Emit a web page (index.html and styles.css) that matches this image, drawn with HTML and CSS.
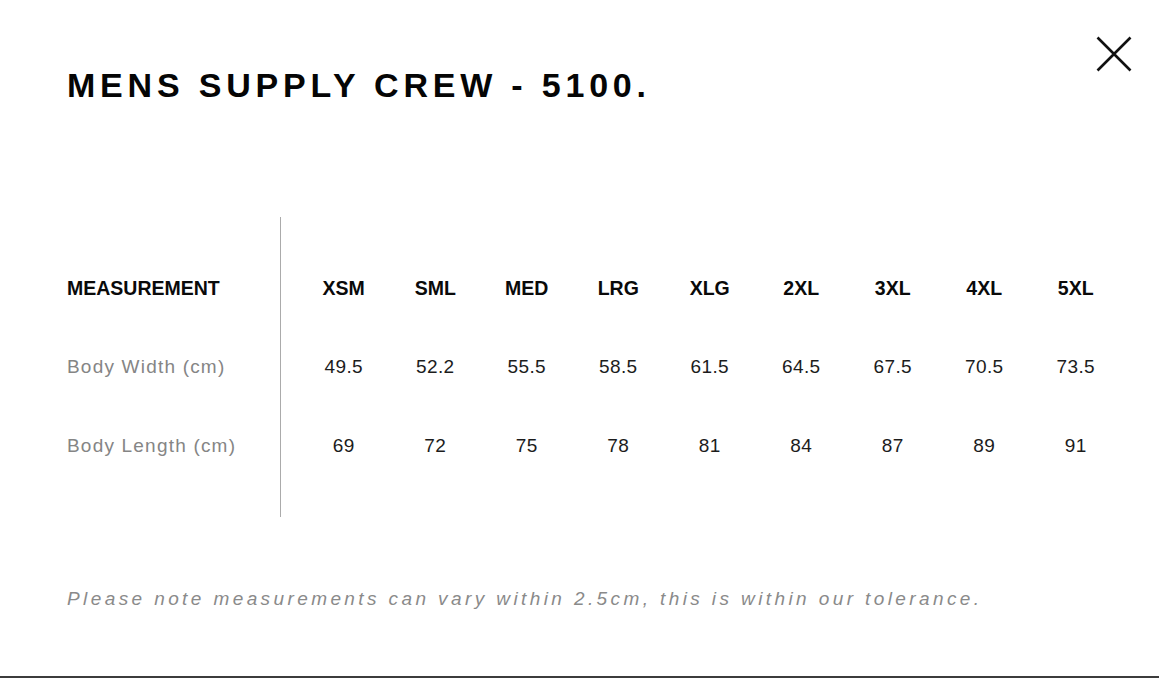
FILE: index.html
```html
<!DOCTYPE html>
<html lang="en">
<head>
<meta charset="utf-8">
<title>Mens Supply Crew - 5100 size guide</title>
<link rel="stylesheet" href="styles.css">
</head>
<body>
<div class="modal">
  <button class="close" aria-label="Close">
    <svg width="38" height="38" viewBox="0 0 38 38"><path d="M2.5 2.5 L35.5 35.5 M35.5 2.5 L2.5 35.5" stroke="#111" stroke-width="2.6" fill="none"/></svg>
  </button>
  <h1 class="title">MENS SUPPLY CREW - 5100.</h1>
  <div class="chart">
    <div class="divider"></div>
    <div class="label head r1">MEASUREMENT</div>
    <div class="cell head r1">XSM</div>
    <div class="cell head r1">SML</div>
    <div class="cell head r1">MED</div>
    <div class="cell head r1">LRG</div>
    <div class="cell head r1">XLG</div>
    <div class="cell head r1">2XL</div>
    <div class="cell head r1">3XL</div>
    <div class="cell head r1">4XL</div>
    <div class="cell head r1">5XL</div>

    <div class="label r2">Body Width (cm)</div>
    <div class="cell r2">49.5</div>
    <div class="cell r2">52.2</div>
    <div class="cell r2">55.5</div>
    <div class="cell r2">58.5</div>
    <div class="cell r2">61.5</div>
    <div class="cell r2">64.5</div>
    <div class="cell r2">67.5</div>
    <div class="cell r2">70.5</div>
    <div class="cell r2">73.5</div>

    <div class="label r3">Body Length (cm)</div>
    <div class="cell r3">69</div>
    <div class="cell r3">72</div>
    <div class="cell r3">75</div>
    <div class="cell r3">78</div>
    <div class="cell r3">81</div>
    <div class="cell r3">84</div>
    <div class="cell r3">87</div>
    <div class="cell r3">89</div>
    <div class="cell r3">91</div>
  </div>
  <p class="note">Please note measurements can vary within 2.5cm, this is within our tolerance.</p>
</div>
</body>
</html>
```

FILE: styles.css
```css
html, body {
  margin: 0;
  padding: 0;
  background: #fff;
}

body {
  font-family: "Liberation Sans", Arial, Helvetica, sans-serif;
  color: #111;
}

.modal {
  position: relative;
  box-sizing: border-box;
  height: 678px;
  padding: 68px 0 0 67px;
  border-bottom: 2px solid #3c3c3c;
}

.close {
  position: absolute;
  top: 35px;
  left: 1095px;
  width: 38px;
  height: 38px;
  padding: 0;
  border: 0;
  background: none;
  cursor: pointer;
}

.close svg {
  display: block;
}

.title {
  margin: 0;
  font-size: 34px;
  line-height: 34px;
  font-weight: 700;
  letter-spacing: 4.8px;
  color: #050505;
}

.chart {
  margin-top: 115px;
  display: grid;
  grid-template-columns: 213px 18px repeat(9, 91.5px);
  grid-template-rows: 31px 79px 79px 79px 32px;
  align-items: center;
}

.divider {
  grid-column: 2;
  grid-row: 1 / 6;
  align-self: stretch;
  justify-self: start;
  width: 1px;
  background: #ababab;
}

.label {
  grid-column: 1;
  font-size: 19px;
  line-height: 24px;
  letter-spacing: 1.2px;
  color: #858585;
}

.cell {
  text-align: center;
  font-size: 19px;
  line-height: 24px;
  letter-spacing: 0.4px;
  color: #1c1c1c;
}

.head {
  font-size: 19.5px;
  font-weight: 700;
  color: #0a0a0a;
  letter-spacing: 0;
}

.r1 { grid-row: 2; }
.r2 { grid-row: 3; }
.r3 { grid-row: 4; }

.note {
  margin: 70px 0 0;
  font-size: 19px;
  line-height: 24px;
  font-style: italic;
  letter-spacing: 3.4px;
  color: #8a8a8a;
}
```
